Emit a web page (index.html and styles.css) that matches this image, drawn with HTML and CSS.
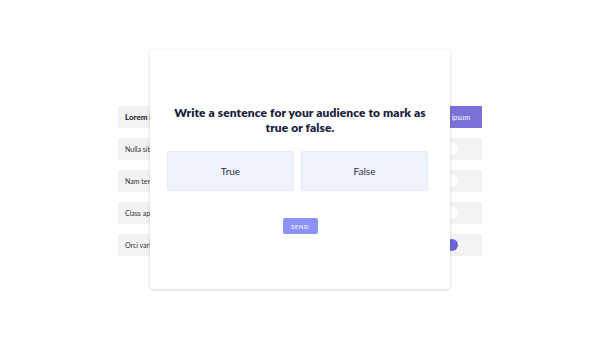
FILE: index.html
```html
<!DOCTYPE html>
<html lang="en">
<head>
    <meta charset="UTF-8">
    <title>True or False</title>
    <link rel="stylesheet" href="styles.css">
</head>
<body>
    <div class="stage">
        <div class="table">
            <div class="row row-head">
                <span class="cell">Lorem ipsum dolor</span>
                <span class="head-accent">Lorem ipsum</span>
            </div>
            <div class="row">
                <span class="cell">Nulla sit amet</span>
                <span class="knob"></span>
            </div>
            <div class="row">
                <span class="cell">Nam tempor</span>
                <span class="knob"></span>
            </div>
            <div class="row">
                <span class="cell">Class aptent</span>
                <span class="knob"></span>
            </div>
            <div class="row">
                <span class="cell">Orci varius</span>
                <span class="knob knob-on"></span>
            </div>
        </div>

        <div class="modal">
            <h2 class="question">Write a sentence for your audience to mark as true or false.</h2>
            <div class="choices">
                <button class="choice">True</button>
                <button class="choice">False</button>
            </div>
            <button class="send">SEND</button>
        </div>
    </div>
</body>
</html>
```

FILE: styles.css
```css
* {
    margin: 0;
    padding: 0;
    box-sizing: border-box;
}

body {
    font-family: 'Lato', 'Noto Sans', sans-serif;
    background: #ffffff;
    width: 600px;
    height: 338px;
    overflow: hidden;
}

.stage {
    position: relative;
    width: 600px;
    height: 338px;
    padding: 106px 0 0 118px;
}

.table {
    width: 364px;
    display: flex;
    flex-direction: column;
    gap: 10px;
}

.row {
    height: 22px;
    background: #f2f2f2;
    display: flex;
    align-items: center;
    justify-content: space-between;
    padding-left: 7px;
    font-size: 7px;
    color: #333;
}

/* the modal covers everything past x=150 */
.cell {
    width: 25px;
    overflow: hidden;
    white-space: nowrap;
}

.row-head .cell {
    font-weight: bold;
    font-size: 8px;
    color: #111;
}

.head-accent {
    align-self: stretch;
    width: 80px;
    background: #7a71d8;
    color: #fff;
    font-size: 7px;
    display: flex;
    align-items: center;
    justify-content: flex-end;
    padding-right: 12px;
}

.knob {
    width: 12px;
    height: 12px;
    border-radius: 50%;
    background: #ffffff;
    margin-right: 24px;
}

.knob-on {
    background: #6c63d8;
}

.modal {
    position: absolute;
    left: 150px;
    top: 49px;
    width: 300px;
    height: 240px;
    background: #ffffff;
    border-radius: 3px;
    box-shadow: 0 1px 3px rgba(0, 0, 0, 0.18);
    padding: 56px 22px 0 17px;
    display: flex;
    flex-direction: column;
    align-items: center;
}

.question {
    font-size: 12px;
    line-height: 15px;
    font-weight: 800;
    letter-spacing: 0.1px;
    color: #1a1f3d;
    text-align: center;
    margin: 0 -3px 0 2px;
}

.choices {
    display: flex;
    gap: 7px;
    width: 100%;
    margin-top: 16px;
}

.choice {
    flex: 1;
    height: 40px;
    background: #eef2fb;
    border: 1px solid #e6eaf4;
    border-radius: 2px;
    font-family: inherit;
    font-size: 10px;
    color: #2b2f45;
}

.send {
    margin-top: 27px;
    margin-left: 5px;
    width: 35px;
    height: 16px;
    background: #8d92f7;
    border: none;
    border-radius: 2px;
    color: #e8eaff;
    font-family: inherit;
    font-size: 6px;
    font-weight: bold;
    letter-spacing: 0.5px;
}
```
